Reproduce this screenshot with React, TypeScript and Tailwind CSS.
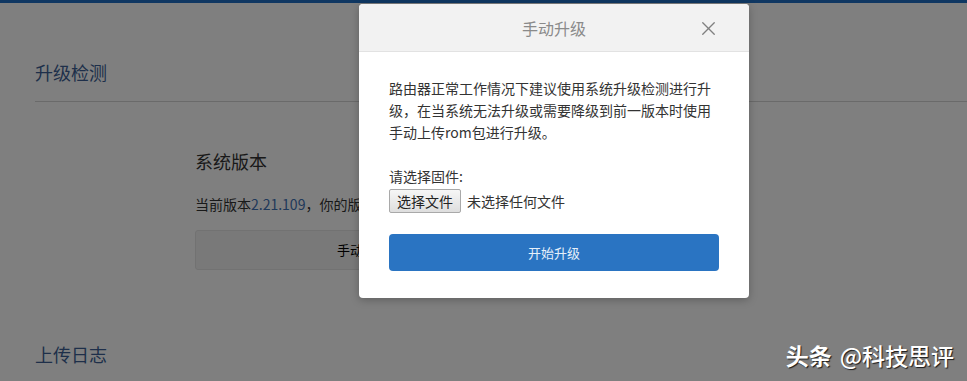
import { X } from "lucide-react"

const cjk = { fontFamily: '"Noto Sans CJK SC", "Noto Sans", sans-serif' }

function UpgradePage() {
  return (
    <div className="min-h-[381px] bg-white" style={cjk}>
      <div className="h-[3px] bg-[#1f6fc5]" />
      <div className="pl-[35px]">
        <div className="border-b border-[#d4d4d4] pt-[57px] pb-[17px]">
          <h2 className="text-[18px] leading-[24px] text-[#3d5f95]">升级检测</h2>
        </div>
        <div className="pl-[160px] pt-[47px]">
          <h3 className="text-[18px] leading-[24px] text-[#333]">系统版本</h3>
          <p className="mt-[21px] text-[14px] leading-[20px] text-[#333]">
            当前版本<span className="text-[#3e72b5]">2.21.109</span>，你的版本已是最新版本
          </p>
          <button
            type="button"
            className="mt-[16px] flex h-[40px] w-[336px] items-center justify-center rounded-[3px] border border-[#e4e4e4] bg-[#f3f3f3] text-[13px] text-black"
          >
            手动升级
          </button>
        </div>
        <h2 className="mt-[72px] text-[18px] leading-[24px] text-[#3d5f95]">上传日志</h2>
      </div>
    </div>
  )
}

function ManualUpgradeModal() {
  return (
    <div
      className="absolute left-[359px] top-[4px] w-[390px] overflow-hidden rounded-[4px] bg-white shadow-[0_2px_8px_rgba(0,0,0,0.25)]"
      style={cjk}
    >
      <div className="relative flex h-[48px] items-center justify-center border-b border-[#e2e2e2] bg-[#f2f2f2]">
        <span className="text-[16px] text-[#8a8a8a]">手动升级</span>
        <X className="absolute right-[29px] top-[13px] h-[23px] w-[23px] text-[#808080]" strokeWidth={1.4} />
      </div>
      <div className="px-[30px] pt-[25px] pb-[27px]">
        <p className="text-[14px] leading-[22px] text-[#333]">
          路由器正常工作情况下建议使用系统升级检测进行升级，在当系统无法升级或需要降级到前一版本时使用手动上传rom包进行升级。
        </p>
        <div className="mt-[24px] text-[14px] leading-[18px] text-[#333]">请选择固件:</div>
        <div className="mt-[4px] flex items-center gap-[6px] text-[14px] text-[#333]">
          <button
            type="button"
            className="h-[24px] rounded-[2px] border border-[#a9a9a9] bg-gradient-to-b from-[#f6f6f6] to-[#dedede] px-[7px] text-[14px] leading-[18px] text-[#222]"
          >
            选择文件
          </button>
          <span>未选择任何文件</span>
        </div>
        <button
          type="button"
          className="mt-[21px] flex h-[37px] w-full items-center justify-center rounded-[4px] bg-[#2a74c2] text-[13px] text-[#e6f0fa]"
        >
          开始升级
        </button>
      </div>
    </div>
  )
}

export default function App() {
  return (
    <div className="relative h-[381px] w-[967px] overflow-hidden">
      <UpgradePage />
      <div className="absolute inset-0 bg-black/50" />
      <ManualUpgradeModal />
      <div
        className="absolute right-[13px] top-[338px] flex items-baseline gap-[8px] text-[23px] text-white [text-shadow:1px_1px_1px_rgba(0,0,0,0.8)]"
        style={cjk}
      >
        <span className="font-bold">头条</span>
        <span className="font-medium">@科技思评</span>
      </div>
    </div>
  )
}
